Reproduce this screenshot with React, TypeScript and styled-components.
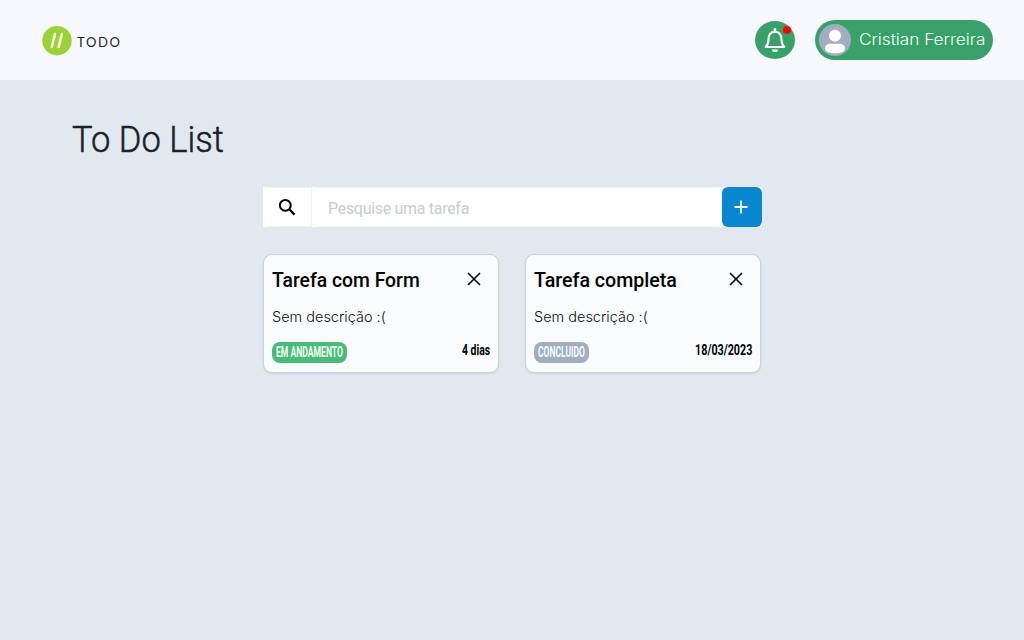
import React from "react";
import styled, { createGlobalStyle } from "styled-components";

const GlobalStyle = createGlobalStyle`
  * { box-sizing: border-box; }
  body { margin: 0; background: #e2e8f0; font-family: Roboto, "Liberation Sans", sans-serif; color: #000; }
  button, input { font: inherit; border: 0; padding: 0; margin: 0; }
`;

const Page = styled.div`
  min-height: 640px;
  background: #e2e8f0;
`;

const Header = styled.header`
  height: 80px;
  background: #f6f8fc;
  display: flex;
  align-items: center;
  justify-content: space-between;
  padding: 0 31px 0 42px;
`;

const Brand = styled.div`
  display: flex;
  align-items: center;
  gap: 5px;
  padding-top: 1px;
  svg { display: block; }
`;

const BrandName = styled.span`
  font: 400 13px/16px Lato, sans-serif;
  letter-spacing: 1.65px;
  color: #22252f;
  padding-top: 2px;
`;

const HeaderActions = styled.div`
  display: flex;
  align-items: center;
  gap: 20px;
`;

const BellButton = styled.button`
  position: relative;
  width: 40px;
  height: 38px;
  border-radius: 50%;
  background: #38a169;
  display: grid;
  place-items: center;
`;

const Dot = styled.span`
  position: absolute;
  top: 5px;
  right: 4px;
  width: 8px;
  height: 8px;
  border-radius: 50%;
  background: #f00;
`;

const UserPill = styled.div`
  width: 178px;
  height: 40px;
  border-radius: 20px;
  background: #38a169;
  display: flex;
  align-items: center;
  gap: 8px;
  padding-left: 4px;
  svg { display: block; flex: none; }
`;

const Fitted = styled.span<{ $x?: number; $origin?: string }>`
  display: inline-block;
  white-space: nowrap;
  transform: scaleX(${(p) => p.$x ?? 1});
  transform-origin: ${(p) => p.$origin ?? "left"} center;
`;

const UserName = styled(Fitted)`
  font: 300 16px/24px Inter, sans-serif;
  color: #f0fff4;
  padding-bottom: 2px;
`;

const Title = styled.h1`
  margin: 0;
  padding: 33px 0 0 72px;
  height: 107px;
  font: 300 37px/54px Roboto, sans-serif;
  color: #1a202c;
  -webkit-text-stroke: 0.5px #1a202c;
`;

const Content = styled.main`
  width: 498px;
  margin-left: 263px;
`;

const SearchBar = styled.form`
  width: 499px;
  height: 40px;
  display: flex;
  background: #fff;
`;

const SearchIcon = styled.div`
  width: 49px;
  height: 40px;
  display: grid;
  place-items: center;
  padding-right: 1px;
  border: 1px solid #edf2f7;
  border-left-color: #fff;
  border-radius: 6px 0 0 6px;
`;

const SearchInput = styled.input`
  flex: 1;
  min-width: 0;
  height: 40px;
  background: #fff;
  border: 1px solid #f1f5f9;
  border-left: 0;
  border-radius: 6px;
  padding: 3px 0 0 16px;
  font: 400 16px/24px Roboto, sans-serif;
  outline: 0;
  &::placeholder { color: #c9ccd0; opacity: 1; font-weight: 400; letter-spacing: -0.3px; }
`;

const AddButton = styled.button`
  width: 40px;
  height: 40px;
  border-radius: 6px;
  background: #0987cf;
  display: grid;
  place-items: center;
  padding-right: 2px;
`;

const Cards = styled.section`
  margin-top: 27px;
  display: flex;
  gap: 26px;
`;

const Card = styled.article`
  width: 236px;
  height: 119px;
  border: 1px solid #cbd0e0;
  border-radius: 9px;
  background: #f9fbfd;
  box-shadow: 0 1px 2px rgba(0, 0, 0, 0.1);
  padding: 8px;
`;

const CardHead = styled.div`
  height: 34px;
  display: flex;
  align-items: center;
  justify-content: space-between;
  padding-right: 9px;
  svg { display: block; margin-bottom: 2px; }
`;

const CardTitle = styled(Fitted)`
  font: 500 20px/32px Roboto, sans-serif;
`;

const Description = styled.p`
  margin: 8px 0 0;
  height: 24px;
  font: 300 14px/24px Inter, sans-serif;
  color: #111;
`;

const CardFoot = styled.div`
  display: flex;
  justify-content: space-between;
  padding-top: 13px;
`;

const Badge = styled.span<{ $tone: "active" | "done" }>`
  width: ${(p) => (p.$tone === "active" ? 75 : 55)}px;
  height: 21px;
  border-radius: 8px;
  background: ${(p) => (p.$tone === "active" ? "#48bb78" : "#a0aec0")};
  color: ${(p) => (p.$tone === "active" ? "#f0fff4" : "#f7fafc")};
  font: 700 14.5px/21px Roboto, sans-serif;
  padding-left: 4px;
`;

const DateText = styled.span`
  font: 700 14.5px/17px Roboto, sans-serif;
  display: flex;
  justify-content: flex-end;
  width: 90px;
`;

type Task = {
  title: string; titleX: number;
  status: string; statusX: number; tone: "active" | "done";
  date: string; dateX: number;
};

const tasks: Task[] = [
  { title: "Tarefa com Form", titleX: 0.966, status: "EM ANDAMENTO", statusX: 0.592, tone: "active", date: "4 dias", dateX: 0.72 },
  { title: "Tarefa completa", titleX: 0.98, status: "CONCLUIDO", statusX: 0.585, tone: "done", date: "18/03/2023", dateX: 0.74 },
];

export default function App() {
  return (
    <Page>
      <GlobalStyle />
      <Header>
        <Brand>
          <svg width="30" height="30" viewBox="0 0 30 30">
            <circle cx="15" cy="14.7" r="14.7" fill="#9bd336" />
            <path d="M13 8 9.8 21M19.8 8l-3.2 13" stroke="#fffde8" strokeWidth="2.5" strokeLinecap="round" />
          </svg>
          <BrandName>TODO</BrandName>
        </Brand>
        <HeaderActions>
          <BellButton aria-label="Notificações">
            <svg width="24" height="26" viewBox="0 0 24 26" fill="none" stroke="#fff" strokeWidth="2.1" strokeLinejoin="round">
              <path d="M2.7 20h18.6c-2.2-2-2.8-4.1-2.8-7.2 0-4.8-2-8-6.5-8s-6.5 3.2-6.5 8c0 3.1-.6 5.2-2.8 7.2Z" />
              <path d="M12 2.4v2" strokeWidth="2.6" strokeLinecap="round" />
              <path d="M9 22.5h6a3 2.6 0 0 1-6 0Z" fill="#fff" stroke="none" />
            </svg>
            <Dot />
          </BellButton>
          <UserPill>
            <svg width="32" height="32" viewBox="0 0 32 32">
              <circle cx="16" cy="16" r="16" fill="#a0aec0" />
              <circle cx="16" cy="11.8" r="6" fill="#fff" />
              <path d="M6 24.5c0-3.2 2.4-4.7 5.6-4.7h8.8c3.2 0 5.6 1.5 5.6 4.7 0 3.3-4.8 4.9-10 4.9S6 27.800 6 24.500Z" fill="#fff" />
            </svg>
            <UserName $x={1.073}>Cristian Ferreira</UserName>
          </UserPill>
        </HeaderActions>
      </Header>
      <Title><Fitted $x={0.934}>To Do List</Fitted></Title>
      <Content>
        <SearchBar>
          <SearchIcon>
            <svg width="18" height="18" viewBox="0 0 18 18" fill="none" stroke="#000" strokeWidth="2">
              <circle cx="7.3" cy="7.3" r="5.4" />
              <path d="m11.2 11.2 5.4 5.4" strokeWidth="2.3" />
            </svg>
          </SearchIcon>
          <SearchInput placeholder="Pesquise uma tarefa" />
          <AddButton type="button" aria-label="Adicionar">
            <svg width="14" height="14" viewBox="0 0 14 14" stroke="#fff" strokeWidth="1.8">
              <path d="M7 .5v13M.5 7h13" />
            </svg>
          </AddButton>
        </SearchBar>
        <Cards>
          {tasks.map((t) => (
            <Card key={t.title}>
              <CardHead>
                <CardTitle $x={t.titleX}>{t.title}</CardTitle>
                <svg width="14" height="14" viewBox="0 0 14 14" stroke="#000" strokeWidth="1.6">
                  <path d="m1 1 12 12M13 1 1 13" />
                </svg>
              </CardHead>
              <Description><Fitted $x={1.035}>Sem descrição :(</Fitted></Description>
              <CardFoot>
                <Badge $tone={t.tone}><Fitted $x={t.statusX}>{t.status}</Fitted></Badge>
                <DateText><Fitted $x={t.dateX} $origin="right">{t.date}</Fitted></DateText>
              </CardFoot>
            </Card>
          ))}
        </Cards>
      </Content>
    </Page>
  );
}
